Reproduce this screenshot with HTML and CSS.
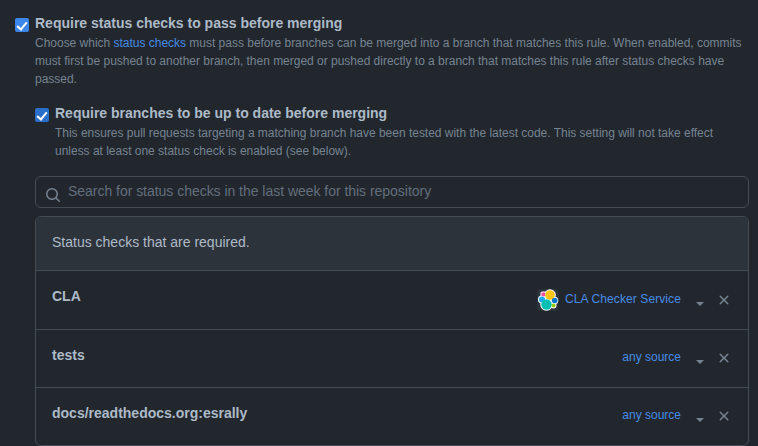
FILE: index.html
```html
<!DOCTYPE html>
<html lang="en">
<head>
    <meta charset="UTF-8">
    <title>Branch protection</title>
    <link rel="stylesheet" href="styles.css">
</head>
<body>
    <div class="rule">
        <input type="checkbox" class="check" checked>
        <div class="rule-body">
            <h3 class="rule-title">Require status checks to pass before merging</h3>
            <p class="note">Choose which <a href="#" class="link">status checks</a> must pass before branches can be merged into a branch that matches this rule. When enabled, commits must first be pushed to another branch, then merged or pushed directly to a branch that matches this rule after status checks have passed.</p>
        </div>
    </div>

    <div class="nested">
        <div class="rule">
            <input type="checkbox" class="check check-dim" checked>
            <div class="rule-body">
                <h3 class="rule-title">Require branches to be up to date before merging</h3>
                <p class="note">This ensures pull requests targeting a matching branch have been tested with the latest code. This setting will not take effect unless at least one status check is enabled (see below).</p>
            </div>
        </div>

        <div class="search">
            <svg class="search-icon" width="16" height="16" viewBox="0 0 16 16" fill="currentColor"><path d="M10.68 11.74a6 6 0 0 1-7.922-8.982 6 6 0 0 1 8.982 7.922l3.04 3.04a.749.749 0 0 1-.326 1.275.749.749 0 0 1-.734-.215ZM11.5 7a4.499 4.499 0 1 0-8.997 0A4.499 4.499 0 0 0 11.5 7Z"/></svg>
            <span class="placeholder">Search for status checks in the last week for this repository</span>
        </div>

        <div class="box">
            <div class="box-header">Status checks that are required.</div>

            <div class="box-row row-first">
                <strong class="check-name">CLA</strong>
                <div class="actions">
                    <svg class="app-logo" width="22" height="22" viewBox="0 0 22 22">
                        <rect width="22" height="22" rx="4" fill="#2d333b"/>
                        <rect x="3.5" y="2.5" width="6" height="6" rx="1.5" fill="#fff"/>
                        <circle cx="5" cy="10.5" r="4" fill="#fff"/>
                        <circle cx="13" cy="6" r="5.8" fill="#fff"/>
                        <circle cx="9.5" cy="15.5" r="6.2" fill="#fff"/>
                        <circle cx="17.5" cy="11.5" r="3.8" fill="#fff"/>
                        <circle cx="16.5" cy="16.5" r="3" fill="#fff"/>
                        <rect x="4.5" y="3.5" width="3.8" height="3.8" rx=".8" fill="#f04e98"/>
                        <circle cx="5" cy="10.5" r="3" fill="#1ba9f5"/>
                        <circle cx="13" cy="6" r="4.8" fill="#fec514"/>
                        <circle cx="9.5" cy="15.5" r="5.2" fill="#00bfb3"/>
                        <circle cx="17.7" cy="11.5" r="2.8" fill="#0077cc"/>
                        <circle cx="16.5" cy="16.5" r="2" fill="#93c90e"/>
                    </svg>
                    <a href="#" class="link source source-app">CLA Checker Service</a>
                    <span class="caret"></span>
                    <svg class="remove" width="16" height="16" viewBox="0 0 16 16" fill="currentColor"><path d="M3.72 3.72a.75.75 0 0 1 1.06 0L8 6.94l3.22-3.22a.75.75 0 1 1 1.06 1.06L9.06 8l3.22 3.22a.75.75 0 1 1-1.06 1.06L8 9.06l-3.22 3.22a.75.75 0 0 1-1.06-1.06L6.94 8 3.72 4.78a.75.75 0 0 1 0-1.06Z"/></svg>
                </div>
            </div>

            <div class="box-row">
                <strong class="check-name">tests</strong>
                <div class="actions">
                    <a href="#" class="link source">any source</a>
                    <span class="caret"></span>
                    <svg class="remove" width="16" height="16" viewBox="0 0 16 16" fill="currentColor"><path d="M3.72 3.72a.75.75 0 0 1 1.06 0L8 6.94l3.22-3.22a.75.75 0 1 1 1.06 1.06L9.06 8l3.22 3.22a.75.75 0 1 1-1.06 1.06L8 9.06l-3.22 3.22a.75.75 0 0 1-1.06-1.06L6.94 8 3.72 4.78a.75.75 0 0 1 0-1.06Z"/></svg>
                </div>
            </div>

            <div class="box-row">
                <strong class="check-name">docs/readthedocs.org:esrally</strong>
                <div class="actions">
                    <a href="#" class="link source">any source</a>
                    <span class="caret"></span>
                    <svg class="remove" width="16" height="16" viewBox="0 0 16 16" fill="currentColor"><path d="M3.72 3.72a.75.75 0 0 1 1.06 0L8 6.94l3.22-3.22a.75.75 0 1 1 1.06 1.06L9.06 8l3.22 3.22a.75.75 0 1 1-1.06 1.06L8 9.06l-3.22 3.22a.75.75 0 0 1-1.06-1.06L6.94 8 3.72 4.78a.75.75 0 0 1 0-1.06Z"/></svg>
                </div>
            </div>
        </div>
    </div>
</body>
</html>
```

FILE: styles.css
```css
body {
    font-family: "Liberation Sans", Arial, sans-serif;
    font-size: 14px;
    color: #adbac7;
    background-color: #22272e;
    margin: 0;
    padding: 14px 9px 0 15px;
    height: 446px;
    box-sizing: border-box;
    overflow: hidden;
}

.rule {
    display: flex;
    align-items: flex-start;
    gap: 6px;
}

.check {
    appearance: none;
    width: 14px;
    height: 14px;
    margin: 4px 0 0;
    flex: none;
    border-radius: 2px;
    background-color: #3b86e8;
    position: relative;
}

.check::after {
    content: "";
    position: absolute;
    left: 4px;
    top: 1.5px;
    width: 4px;
    height: 8px;
    border: solid #fff;
    border-width: 0 2px 2px 0;
    transform: rotate(40deg);
}

.check-dim {
    background-color: #2a6fca;
}

.rule-title {
    font-size: 14px;
    font-weight: 700;
    line-height: 18px;
    margin: 0 0 2px;
}

.note {
    font-size: 12px;
    line-height: 18px;
    letter-spacing: -0.015px;
    color: #768390;
    margin: 0;
}

.link {
    color: #478be6;
    text-decoration: none;
}

.nested {
    margin: 16px 0 0 20px;
}

.search {
    display: flex;
    align-items: center;
    gap: 7px;
    height: 32px;
    margin-top: 16px;
    padding: 0 9px;
    box-sizing: border-box;
    border: 1px solid #444c56;
    border-radius: 6px;
}

.search-icon {
    color: #768390;
    flex: none;
    margin-top: 5px;
}

.placeholder {
    color: #636e7b;
    letter-spacing: -0.03px;
    padding-bottom: 2px;
}

.box {
    margin-top: 8px;
    border: 1px solid #444c56;
    border-radius: 6px;
    height: 230px;
    box-sizing: border-box;
}

.box-header {
    height: 53px;
    padding: 16px 16px 0;
    box-sizing: border-box;
    line-height: 18px;
    background-color: #2d333b;
    border-radius: 6px 6px 0 0;
}

.box-row {
    display: flex;
    justify-content: space-between;
    align-items: flex-start;
    height: 58px;
    padding: 16px 16px 0;
    box-sizing: border-box;
    border-top: 1px solid #444c56;
}

.row-first {
    height: 59px;
}

.check-name {
    line-height: 18px;
}

.actions {
    display: flex;
    align-items: flex-start;
    margin-top: 1px;
}

.row-first .actions {
    margin-top: 2px;
}

.app-logo {
    flex: none;
    margin-right: 6px;
}

.source {
    font-size: 12px;
    line-height: 20px;
}

.source-app {
    letter-spacing: 0.1px;
}

.caret {
    width: 0;
    height: 0;
    margin: 13px 0 0 15px;
    border-style: solid;
    border-width: 4px 4px 0;
    border-color: #768390 transparent transparent;
}

.remove {
    color: #768390;
    flex: none;
    margin: 3px 0 0 12px;
}
```
